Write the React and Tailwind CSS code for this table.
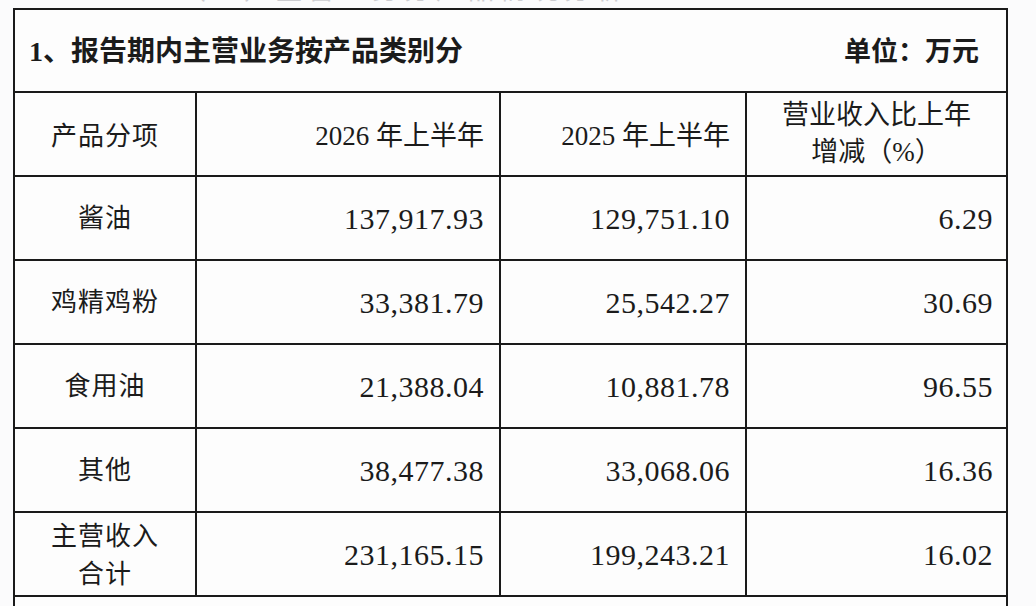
const rows = [
  { name: '酱油', cur: '137,917.93', prev: '129,751.10', rate: '6.29' },
  { name: '鸡精鸡粉', cur: '33,381.79', prev: '25,542.27', rate: '30.69' },
  { name: '食用油', cur: '21,388.04', prev: '10,881.78', rate: '96.55' },
  { name: '其他', cur: '38,477.38', prev: '33,068.06', rate: '16.36' },
];

const font = { fontFamily: '"Liberation Serif", "Noto Sans CJK SC", serif' };

const Cell = ({ children, className = '' }) => (
  <div className={`flex items-center bg-[#fdfdfd] ${className}`}>{children}</div>
);

const App = () => {
  return (
    <div className="h-[606px] overflow-hidden bg-[#fbfbfc] text-[#1b1b1b]" style={font}>
      <div className="ml-[180px] h-[8px] overflow-hidden">
        <p className="-mt-[24px] text-[26px] leading-[30px] tracking-[6px] text-[#cdcdd1]">
          （二）主营业务分产品情况分析
        </p>
      </div>

      <div className="ml-[13px] grid w-[995px] grid-cols-[180px_302px_244px_259px] gap-[2px] bg-[#1a1a1a] p-[2px]">
        <Cell className="col-span-4 h-[81px] justify-between pl-[14px] pr-[27px] pt-[3px] text-[28px] font-bold">
          <span>1、报告期内主营业务按产品类别分</span>
          <span className="text-[27px]">单位：万元</span>
        </Cell>

        <Cell className="h-[82px] justify-center pt-[4px] text-[26px] tracking-[1px]">产品分项</Cell>
        <Cell className="justify-end pr-[15px] pt-[4px] text-[27px]">
          2026 年上半年
        </Cell>
        <Cell className="justify-end pr-[15px] pt-[4px] text-[27px]">
          2025 年上半年
        </Cell>
        <Cell className="flex-col justify-center text-center text-[27px] leading-[37px]">
          <span>营业收入比上年</span>
          <span>增减（%）</span>
        </Cell>

        {rows.map((r) => (
          <div key={r.name} className="contents">
            <Cell className="h-[82px] justify-center text-[26px] tracking-[1px]">{r.name}</Cell>
            <Cell className="justify-end pr-[15px] text-[30px] tracking-[0.5px]">{r.cur}</Cell>
            <Cell className="justify-end pr-[15px] text-[30px] tracking-[0.5px]">{r.prev}</Cell>
            <Cell className="justify-end pr-[13px] text-[30px] tracking-[0.5px]">{r.rate}</Cell>
          </div>
        ))}

        <Cell className="h-[82px] flex-col justify-center pt-[4px] text-center text-[26px] leading-[38px] tracking-[1px]">
          <span>主营收入</span>
          <span>合计</span>
        </Cell>
        <Cell className="justify-end pr-[15px] text-[30px] tracking-[0.5px]">231,165.15</Cell>
        <Cell className="justify-end pr-[15px] text-[30px] tracking-[0.5px]">199,243.21</Cell>
        <Cell className="justify-end pr-[13px] text-[30px] tracking-[0.5px]">16.02</Cell>

        <Cell className="col-span-4 h-[60px]" />
      </div>
    </div>
  );
};

export default App;
